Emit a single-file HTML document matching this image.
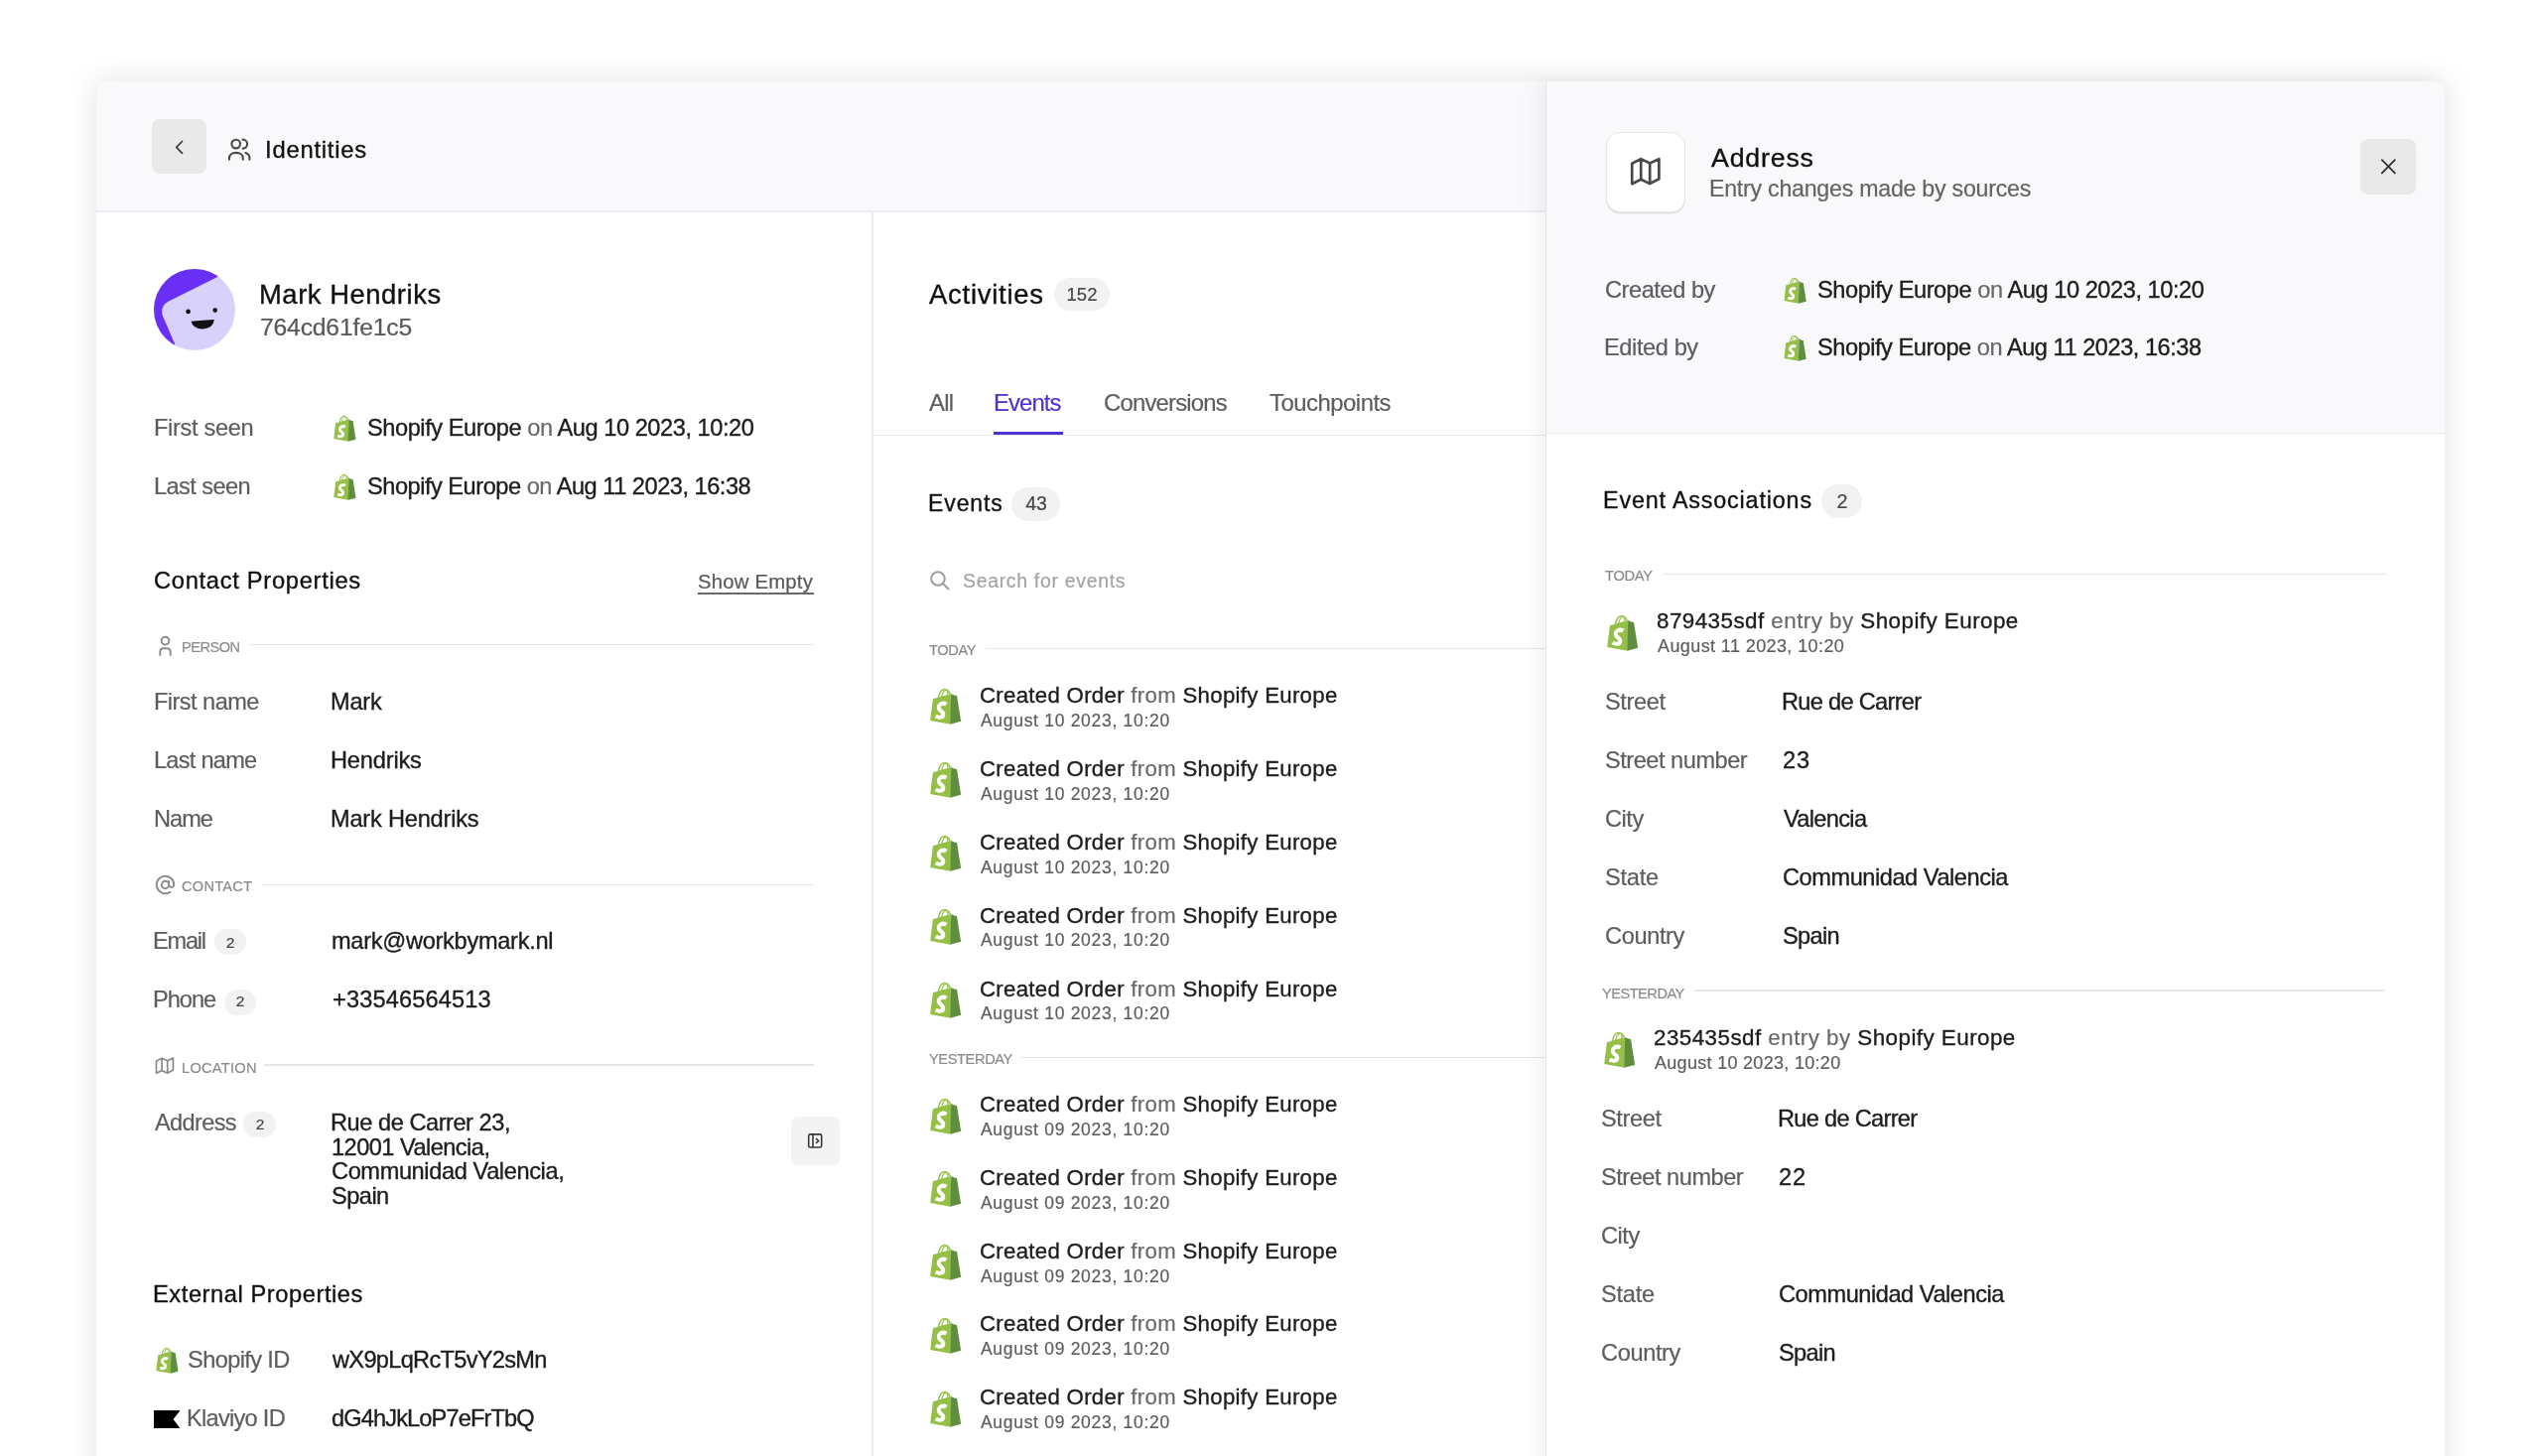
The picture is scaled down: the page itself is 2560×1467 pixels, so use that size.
<!DOCTYPE html><html><head><meta charset="utf-8"><style>
*{margin:0;padding:0;box-sizing:content-box}
html,body{width:2560px;height:1467px;overflow:hidden;background:#fff}
body{position:relative;font-family:"Liberation Sans",sans-serif}
.r{position:absolute}
.t{position:absolute;white-space:pre;line-height:1}
.t{will-change:transform;-webkit-text-stroke:0.2px currentColor}
.m{-webkit-text-stroke:0.35px currentColor}
</style></head><body><svg width="0" height="0" style="position:absolute"><defs>
<symbol id="shop" viewBox="0 0 32 37">
<path d="M2.8 10.4 L8.2 8.8 L14 7.2 L21.8 5.1 L20.8 36.4 L0 32.5 Z" fill="#95bf47"/>
<path d="M21.5 5.1 L24.6 6.6 L27.4 7.1 L31.6 33.5 L20.5 36.4 Z" fill="#5e8e3e"/>
<path d="M8.4 9.2 C9.6 3.6 11.8 0.6 14.6 0.6 C17.6 0.6 19.4 2.8 20.6 5.4" fill="none" stroke="#95bf47" stroke-width="1.5"/>
<path d="M11.6 8.4 C12.6 4.2 14.2 1.8 16.2 1.4" fill="none" stroke="#95bf47" stroke-width="1.3"/>
<path d="M17.2 2.0 C17.9 2.9 18.2 4.6 18.2 6" fill="none" stroke="#95bf47" stroke-width="1.3"/>
<path d="M16.6 15.9 C14.9 14.8 12.4 14.6 10.5 15.9 C8.2 17.5 8.3 20.3 10.1 21.9 C11.6 23.2 13.6 23.9 13.4 26.5 C13.2 29.4 9.4 30.3 5.6 28.1" fill="none" stroke="#fff" stroke-width="4.1" stroke-linecap="butt"/>
</symbol></defs></svg>
<div class="r" style="left:97.00px;top:82.00px;width:2365.50px;height:1425.00px;background:#ffffff;border-radius:10px;box-shadow:0 0 30px 3px rgba(0,0,0,0.095);overflow:hidden;"></div>
<div class="r" style="left:97.00px;top:82.00px;width:1461.00px;height:130.00px;background:#f9f9fb;border-radius:0px;border-top-left-radius:10px;"></div>
<div class="r" style="left:97.00px;top:212.00px;width:1461.00px;height:1.50px;background:#ededf3;border-radius:0px;"></div>
<div class="r" style="left:878.00px;top:213.00px;width:1.50px;height:1300.00px;background:#ececee;border-radius:0px;"></div>
<div class="r" style="left:153.00px;top:120.00px;width:55.00px;height:55.00px;background:#e9e9ea;border-radius:8px;"></div>
<svg class="r" style="left:170px;top:137px" width="22" height="22" viewBox="0 0 22 22"><path d="M13.5 5.5 L7.7 11.4 L13.5 17.3" fill="none" stroke="#3c3c3f" stroke-width="1.7" stroke-linecap="round" stroke-linejoin="round"/></svg>
<svg class="r" style="left:229px;top:139px" width="24" height="24" viewBox="0 0 24 24"><g fill="none" stroke="#4a4a4a" stroke-width="2.1" stroke-linecap="round"><circle cx="8.7" cy="6.1" r="4.3"/><path d="M2 21.8 V20.2 C2 16.9 4.9 14.9 8.9 14.9 C12.9 14.9 15.8 16.9 15.8 20.2 V21.8"/><path d="M15.6 1.6 A4.5 4.5 0 0 1 15.6 10.6"/><path d="M18.4 15 C20.9 15.8 22.4 17.6 22.4 20.2 V21.8"/></g></svg>
<div id="t0" class="t m" style="left:266.90px;top:139px;font-size:23.80px;color:#111113;letter-spacing:0.776px;">Identities</div>
<svg class="r" style="left:155px;top:271px" width="82" height="82" viewBox="0 0 82 82"><defs><clipPath id="avc"><circle cx="41" cy="41" r="41"/></clipPath></defs><g clip-path="url(#avc)"><rect width="82" height="82" fill="#d8d1fb"/><path d="M-2 -2 H66 L64.2 7.9 L14.5 32.8 Q6.5 37.5 8.6 46.5 L21.5 76.5 L-2 90 Z" fill="#6a2ff4"/></g><circle cx="34.6" cy="42.9" r="2.3" fill="#111"/><circle cx="61.7" cy="41.6" r="2.3" fill="#111"/><path d="M37.5 52.8 Q49 51.6 60.8 51 Q60 59.6 49.5 60.4 Q39.5 60.6 37.5 52.8 Z" fill="#111"/></svg>
<div id="t1" class="t m" style="left:261.30px;top:283px;font-size:27.40px;color:#111113;letter-spacing:0.543px;">Mark Hendriks</div>
<div id="t2" class="t" style="left:261.50px;top:318px;font-size:24.70px;color:#58585b;letter-spacing:-0.182px;">764cd61fe1c5</div>
<div id="t3" class="t" style="left:154.70px;top:420px;font-size:23.60px;color:#5d5d60;letter-spacing:-0.333px;">First seen</div>
<svg class="r" style="left:335.80px;top:418.80px" width="23.00" height="26.20" viewBox="0 0 32 37"><use href="#shop"/></svg>
<div id="t4" class="t" style="left:369.70px;top:420px;font-size:23.60px;color:#1d1d1f;letter-spacing:-0.443px;"><span class="m">Shopify Europe</span> <span style="color:#68686b">on</span> <span class="m">Aug 10 2023, 10:20</span></div>
<div id="t5" class="t" style="left:154.70px;top:479px;font-size:23.60px;color:#5d5d60;letter-spacing:-0.588px;">Last seen</div>
<svg class="r" style="left:335.80px;top:477.60px" width="23.00" height="26.20" viewBox="0 0 32 37"><use href="#shop"/></svg>
<div id="t6" class="t" style="left:369.70px;top:479px;font-size:23.60px;color:#1d1d1f;letter-spacing:-0.485px;"><span class="m">Shopify Europe</span> <span style="color:#68686b">on</span> <span class="m">Aug 11 2023, 16:38</span></div>
<div id="t7" class="t m" style="left:154.90px;top:574px;font-size:23.70px;color:#111113;letter-spacing:0.705px;">Contact Properties</div>
<div id="t8" class="t" style="left:703.40px;top:576px;font-size:20.30px;color:#58585b;letter-spacing:0.222px;">Show Empty</div>
<div class="r" style="left:703.30px;top:597.00px;width:116.40px;height:1.60px;background:#6a6a6a;border-radius:0px;"></div>
<div id="t9" class="t" style="left:182.90px;top:645px;font-size:14.60px;color:#8b8b8e;letter-spacing:-0.500px;">PERSON</div>
<svg class="r" style="left:157px;top:640px" width="20" height="21" viewBox="0 0 20 21"><g fill="none" stroke="#8b8b8b" stroke-width="1.9" stroke-linecap="round"><circle cx="9.5" cy="5.6" r="3.9"/><path d="M4.3 20 V16.8 Q4.3 13.2 7.9 13.2 H11.1 Q14.7 13.2 14.7 16.8 V20"/></g></svg>
<div class="r" style="left:251.00px;top:648.90px;width:569.00px;height:1.20px;background:#e6e6e6;border-radius:0px;"></div>
<div id="t10" class="t" style="left:154.70px;top:696px;font-size:23.60px;color:#5d5d60;letter-spacing:-0.557px;">First name</div>
<div id="t11" class="t m" style="left:333.20px;top:696px;font-size:23.60px;color:#1d1d1f;letter-spacing:-0.201px;">Mark</div>
<div id="t12" class="t" style="left:154.70px;top:755px;font-size:23.60px;color:#5d5d60;letter-spacing:-0.750px;">Last name</div>
<div id="t13" class="t m" style="left:333.20px;top:755px;font-size:23.60px;color:#1d1d1f;letter-spacing:-0.171px;">Hendriks</div>
<div id="t14" class="t" style="left:154.70px;top:814px;font-size:23.60px;color:#5d5d60;letter-spacing:-1.000px;">Name</div>
<div id="t15" class="t m" style="left:333.20px;top:814px;font-size:23.60px;color:#1d1d1f;letter-spacing:-0.208px;">Mark Hendriks</div>
<div id="t16" class="t" style="left:182.90px;top:886px;font-size:14.60px;color:#8b8b8e;letter-spacing:0.251px;">CONTACT</div>
<svg class="r" style="left:156px;top:881px" width="21" height="21" viewBox="0 0 24 24"><g fill="none" stroke="#8b8b8b" stroke-width="2.2" stroke-linecap="round"><circle cx="12" cy="12" r="4.2"/><path d="M16.2 8v4.6a3 3 0 0 0 5.8 0v-0.6a10 10 0 1 0-4.6 8.4"/></g></svg>
<div class="r" style="left:264.00px;top:890.50px;width:556.00px;height:1.20px;background:#e6e6e6;border-radius:0px;"></div>
<div id="t17" class="t" style="left:154.30px;top:937px;font-size:23.60px;color:#5d5d60;letter-spacing:-1.250px;">Email</div>
<div class="r" style="left:216.00px;top:936.00px;width:32.30px;height:26.00px;background:#f2f2f3;border-radius:13.0px;"></div>
<div id="t18" class="t" style="left:232.15px;top:942px;font-size:15.50px;color:#46464a;transform:translateX(-50%);">2</div>
<div id="t19" class="t m" style="left:333.60px;top:937px;font-size:23.60px;color:#1d1d1f;letter-spacing:-0.294px;">mark@workbymark.nl</div>
<div id="t20" class="t" style="left:154.30px;top:996px;font-size:23.60px;color:#5d5d60;letter-spacing:-1.000px;">Phone</div>
<div class="r" style="left:226.00px;top:997.00px;width:32.00px;height:25.60px;background:#f2f2f3;border-radius:12.800000000000011px;"></div>
<div id="t21" class="t" style="left:242.00px;top:1001px;font-size:15.50px;color:#46464a;transform:translateX(-50%);">2</div>
<div id="t22" class="t m" style="left:334.50px;top:996px;font-size:23.60px;color:#1d1d1f;letter-spacing:0.136px;">+33546564513</div>
<div id="t23" class="t" style="left:182.90px;top:1069px;font-size:14.60px;color:#8b8b8e;letter-spacing:0.287px;">LOCATION</div>
<svg class="r" style="left:155px;top:1063px" width="23" height="22" viewBox="0 0 24 23"><path d="M2.6 6.26 L8.45 3.3 L14.3 6.07 L20.3 3.3 V16 L14.3 19.05 L8.45 16.34 L2.6 19.1 Z M8.45 3.3 V16.34 M14.3 6.07 V19.05" fill="none" stroke="#8b8b8b" stroke-width="1.8" stroke-linejoin="round"/></svg>
<div class="r" style="left:266.40px;top:1072.40px;width:553.60px;height:1.20px;background:#e6e6e6;border-radius:0px;"></div>
<div id="t24" class="t" style="left:156.00px;top:1120px;font-size:23.60px;color:#5d5d60;letter-spacing:-0.666px;">Address</div>
<div class="r" style="left:245.40px;top:1120.20px;width:32.60px;height:25.40px;background:#f2f2f3;border-radius:12.699999999999932px;"></div>
<div id="t25" class="t" style="left:261.70px;top:1125px;font-size:15.50px;color:#46464a;transform:translateX(-50%);">2</div>
<div id="t26" class="t m" style="left:332.60px;top:1120px;font-size:23.60px;color:#1d1d1f;letter-spacing:-0.461px;">Rue de Carrer 23,</div>
<div id="t27" class="t m" style="left:333.60px;top:1145px;font-size:23.60px;color:#1d1d1f;letter-spacing:-0.536px;">12001 Valencia,</div>
<div id="t28" class="t m" style="left:333.60px;top:1169px;font-size:23.60px;color:#1d1d1f;letter-spacing:-0.394px;">Communidad Valencia,</div>
<div id="t29" class="t m" style="left:333.60px;top:1194px;font-size:23.60px;color:#1d1d1f;letter-spacing:-0.525px;">Spain</div>
<div class="r" style="left:797.00px;top:1125.30px;width:49.00px;height:49.00px;background:#f3f3f3;border-radius:7px;"></div>
<svg class="r" style="left:812px;top:1141px" width="18" height="18" viewBox="0 0 18 18"><g fill="none" stroke="#3a3a3a" stroke-width="1.6" stroke-linejoin="round" stroke-linecap="round"><rect x="2.7" y="1.9" width="13" height="13.1" rx="1.6"/><path d="M7 1.9 V15"/><path d="M10.5 6.6 L12.8 8.5 L10.5 10.4"/></g></svg>
<div id="t30" class="t m" style="left:153.90px;top:1293px;font-size:23.70px;color:#111113;letter-spacing:0.555px;">External Properties</div>
<svg class="r" style="left:156.70px;top:1358.20px" width="23.10" height="26.20" viewBox="0 0 32 37"><use href="#shop"/></svg>
<div id="t31" class="t" style="left:189.30px;top:1359px;font-size:23.60px;color:#5d5d60;letter-spacing:-0.611px;">Shopify ID</div>
<div id="t32" class="t m" style="left:335.10px;top:1359px;font-size:23.60px;color:#1d1d1f;letter-spacing:-0.700px;">wX9pLqRcT5vY2sMn</div>
<svg class="r" style="left:154.8px;top:1421.2px" width="26.5" height="18.1" viewBox="0 0 26.5 18.1"><path d="M0 0 H26.5 L19.6 9.05 L26.5 18.1 H0 Z" fill="#000"/></svg>
<div id="t33" class="t" style="left:188.30px;top:1418px;font-size:23.60px;color:#5d5d60;letter-spacing:-0.723px;">Klaviyo ID</div>
<div id="t34" class="t m" style="left:334.10px;top:1418px;font-size:23.60px;color:#1d1d1f;letter-spacing:-0.868px;">dG4hJkLoP7eFrTbQ</div>
<div id="t35" class="t m" style="left:936.00px;top:283px;font-size:27.50px;color:#111113;letter-spacing:0.722px;">Activities</div>
<div class="r" style="left:1061.60px;top:279.70px;width:56.70px;height:33.10px;background:#f2f2f3;border-radius:16.55000000000001px;"></div>
<div id="t36" class="t" style="left:1089.95px;top:288px;font-size:18.50px;color:#46464a;transform:translateX(-50%);">152</div>
<div id="t37" class="t" style="left:935.70px;top:394px;font-size:23.90px;color:#5d5d60;letter-spacing:-0.750px;">All</div>
<div id="t38" class="t" style="left:1000.80px;top:394px;font-size:23.90px;color:#5031d2;letter-spacing:-0.900px;">Events</div>
<div id="t39" class="t" style="left:1111.80px;top:394px;font-size:23.90px;color:#5d5d60;letter-spacing:-0.800px;">Conversions</div>
<div id="t40" class="t" style="left:1279.10px;top:394px;font-size:23.90px;color:#5d5d60;letter-spacing:-0.500px;">Touchpoints</div>
<div class="r" style="left:879.00px;top:437.90px;width:680.00px;height:1.40px;background:#e8e8e8;border-radius:0px;"></div>
<div class="r" style="left:1001.00px;top:435.00px;width:70.00px;height:3.20px;background:#5031d2;border-radius:0px;"></div>
<div id="t41" class="t m" style="left:934.70px;top:496px;font-size:23.00px;color:#111113;letter-spacing:0.900px;">Events</div>
<div class="r" style="left:1018.70px;top:490.90px;width:49.60px;height:34.00px;background:#f2f2f3;border-radius:17.0px;"></div>
<div id="t42" class="t" style="left:1043.50px;top:498px;font-size:19.50px;color:#46464a;transform:translateX(-50%);">43</div>
<svg class="r" style="left:935px;top:573px" width="24" height="24" viewBox="0 0 24 24"><g fill="none" stroke="#9d9d9d" stroke-width="2" stroke-linecap="round"><circle cx="10" cy="10" r="6.8"/><path d="M15 15 L20.5 20.5"/></g></svg>
<div id="t43" class="t" style="left:969.80px;top:576px;font-size:19.40px;color:#a3a3a6;letter-spacing:0.719px;">Search for events</div>
<div id="t44" class="t" style="left:935.90px;top:648px;font-size:14.60px;color:#8b8b8e;letter-spacing:-0.375px;">TODAY</div>
<div class="r" style="left:992.70px;top:652.70px;width:565.30px;height:1.20px;background:#e6e6e6;border-radius:0px;"></div>
<svg class="r" style="left:937.30px;top:694.40px" width="31.70" height="36.30" viewBox="0 0 32 37"><use href="#shop"/></svg>
<div id="t45" class="t" style="left:987.40px;top:690px;font-size:22.20px;color:#1d1d1f;letter-spacing:0.312px;"><span class="m">Created Order</span> <span style="color:#68686b">from</span> <span class="m">Shopify Europe</span></div>
<div id="t46" class="t" style="left:988.40px;top:718px;font-size:17.50px;color:#5d5d5d;letter-spacing:0.700px;">August 10 2023, 10:20</div>
<svg class="r" style="left:937.30px;top:768.30px" width="31.70" height="36.30" viewBox="0 0 32 37"><use href="#shop"/></svg>
<div id="t47" class="t" style="left:987.40px;top:764px;font-size:22.20px;color:#1d1d1f;letter-spacing:0.312px;"><span class="m">Created Order</span> <span style="color:#68686b">from</span> <span class="m">Shopify Europe</span></div>
<div id="t48" class="t" style="left:988.40px;top:792px;font-size:17.50px;color:#5d5d5d;letter-spacing:0.700px;">August 10 2023, 10:20</div>
<svg class="r" style="left:937.30px;top:842.20px" width="31.70" height="36.30" viewBox="0 0 32 37"><use href="#shop"/></svg>
<div id="t49" class="t" style="left:987.40px;top:838px;font-size:22.20px;color:#1d1d1f;letter-spacing:0.312px;"><span class="m">Created Order</span> <span style="color:#68686b">from</span> <span class="m">Shopify Europe</span></div>
<div id="t50" class="t" style="left:988.40px;top:866px;font-size:17.50px;color:#5d5d5d;letter-spacing:0.700px;">August 10 2023, 10:20</div>
<svg class="r" style="left:937.30px;top:916.10px" width="31.70" height="36.30" viewBox="0 0 32 37"><use href="#shop"/></svg>
<div id="t51" class="t" style="left:987.40px;top:912px;font-size:22.20px;color:#1d1d1f;letter-spacing:0.312px;"><span class="m">Created Order</span> <span style="color:#68686b">from</span> <span class="m">Shopify Europe</span></div>
<div id="t52" class="t" style="left:988.40px;top:939px;font-size:17.50px;color:#5d5d5d;letter-spacing:0.700px;">August 10 2023, 10:20</div>
<svg class="r" style="left:937.30px;top:990.00px" width="31.70" height="36.30" viewBox="0 0 32 37"><use href="#shop"/></svg>
<div id="t53" class="t" style="left:987.40px;top:986px;font-size:22.20px;color:#1d1d1f;letter-spacing:0.312px;"><span class="m">Created Order</span> <span style="color:#68686b">from</span> <span class="m">Shopify Europe</span></div>
<div id="t54" class="t" style="left:988.40px;top:1013px;font-size:17.50px;color:#5d5d5d;letter-spacing:0.700px;">August 10 2023, 10:20</div>
<div id="t55" class="t" style="left:935.70px;top:1060px;font-size:14.60px;color:#8b8b8e;letter-spacing:-0.375px;">YESTERDAY</div>
<div class="r" style="left:1028.00px;top:1064.70px;width:530.00px;height:1.20px;background:#e6e6e6;border-radius:0px;"></div>
<svg class="r" style="left:937.30px;top:1106.70px" width="31.70" height="36.30" viewBox="0 0 32 37"><use href="#shop"/></svg>
<div id="t56" class="t" style="left:987.40px;top:1102px;font-size:22.20px;color:#1d1d1f;letter-spacing:0.312px;"><span class="m">Created Order</span> <span style="color:#68686b">from</span> <span class="m">Shopify Europe</span></div>
<div id="t57" class="t" style="left:988.40px;top:1130px;font-size:17.50px;color:#5d5d5d;letter-spacing:0.700px;">August 09 2023, 10:20</div>
<svg class="r" style="left:937.30px;top:1180.45px" width="31.70" height="36.30" viewBox="0 0 32 37"><use href="#shop"/></svg>
<div id="t58" class="t" style="left:987.40px;top:1176px;font-size:22.20px;color:#1d1d1f;letter-spacing:0.312px;"><span class="m">Created Order</span> <span style="color:#68686b">from</span> <span class="m">Shopify Europe</span></div>
<div id="t59" class="t" style="left:988.40px;top:1204px;font-size:17.50px;color:#5d5d5d;letter-spacing:0.700px;">August 09 2023, 10:20</div>
<svg class="r" style="left:937.30px;top:1254.20px" width="31.70" height="36.30" viewBox="0 0 32 37"><use href="#shop"/></svg>
<div id="t60" class="t" style="left:987.40px;top:1250px;font-size:22.20px;color:#1d1d1f;letter-spacing:0.312px;"><span class="m">Created Order</span> <span style="color:#68686b">from</span> <span class="m">Shopify Europe</span></div>
<div id="t61" class="t" style="left:988.40px;top:1278px;font-size:17.50px;color:#5d5d5d;letter-spacing:0.700px;">August 09 2023, 10:20</div>
<svg class="r" style="left:937.30px;top:1327.95px" width="31.70" height="36.30" viewBox="0 0 32 37"><use href="#shop"/></svg>
<div id="t62" class="t" style="left:987.40px;top:1323px;font-size:22.20px;color:#1d1d1f;letter-spacing:0.312px;"><span class="m">Created Order</span> <span style="color:#68686b">from</span> <span class="m">Shopify Europe</span></div>
<div id="t63" class="t" style="left:988.40px;top:1351px;font-size:17.50px;color:#5d5d5d;letter-spacing:0.700px;">August 09 2023, 10:20</div>
<svg class="r" style="left:937.30px;top:1401.70px" width="31.70" height="36.30" viewBox="0 0 32 37"><use href="#shop"/></svg>
<div id="t64" class="t" style="left:987.40px;top:1397px;font-size:22.20px;color:#1d1d1f;letter-spacing:0.312px;"><span class="m">Created Order</span> <span style="color:#68686b">from</span> <span class="m">Shopify Europe</span></div>
<div id="t65" class="t" style="left:988.40px;top:1425px;font-size:17.50px;color:#5d5d5d;letter-spacing:0.700px;">August 09 2023, 10:20</div>
<div class="r" style="left:1557px;top:82px;width:904.5px;height:1500px;background:#fff;border-left:1px solid #e4e4e4;box-shadow:-8px 0 20px rgba(0,0,0,0.05);border-top-right-radius:10px;overflow:hidden"></div>
<div class="r" style="left:1558.00px;top:82.00px;width:904.50px;height:354.30px;background:#f9f9fb;border-radius:0px;border-top-right-radius:10px;"></div>
<div class="r" style="left:1558.00px;top:435.60px;width:904.50px;height:1.40px;background:#e9e9e9;border-radius:0px;"></div>
<div class="r" style="left:1618px;top:133px;width:78px;height:79px;background:#fff;border:1px solid #e6e6e6;border-radius:14px;box-shadow:0 1.5px 0 #e2e2e2"></div>
<svg class="r" style="left:1640px;top:157px" width="35" height="31" viewBox="0 0 35 31"><path d="M4.2 7.8 L13.2 3.1 L22.2 7.5 L31.4 3.1 V23.3 L22.2 28.1 L13.2 23.8 L4.2 28.2 Z M13.2 3.1 V23.8 M22.2 7.5 V28.1" fill="none" stroke="#494949" stroke-width="2.7" stroke-linejoin="round"/></svg>
<div id="t66" class="t m" style="left:1724.30px;top:146px;font-size:26.70px;color:#111113;letter-spacing:0.833px;">Address</div>
<div id="t67" class="t" style="left:1722.30px;top:179px;font-size:23.20px;color:#646464;letter-spacing:-0.250px;">Entry changes made by sources</div>
<div class="r" style="left:2378.20px;top:140.00px;width:55.60px;height:56.00px;background:#e9e9ea;border-radius:8px;"></div>
<svg class="r" style="left:2396px;top:158px" width="20" height="20" viewBox="0 0 20 20"><path d="M3.8 3.2 L16.8 16.4 M16.8 3.2 L3.8 16.4" fill="none" stroke="#333" stroke-width="1.9" stroke-linecap="round"/></svg>
<div id="t68" class="t" style="left:1616.60px;top:281px;font-size:23.60px;color:#5d5d60;letter-spacing:-0.444px;">Created by</div>
<svg class="r" style="left:1797.00px;top:279.60px" width="23.40" height="26.20" viewBox="0 0 32 37"><use href="#shop"/></svg>
<div id="t69" class="t" style="left:1831.20px;top:281px;font-size:23.60px;color:#1d1d1f;letter-spacing:-0.443px;"><span class="m">Shopify Europe</span> <span style="color:#68686b">on</span> <span class="m">Aug 10 2023, 10:20</span></div>
<div id="t70" class="t" style="left:1615.60px;top:339px;font-size:23.60px;color:#5d5d60;letter-spacing:-0.401px;">Edited by</div>
<svg class="r" style="left:1797.00px;top:338.20px" width="23.40" height="26.20" viewBox="0 0 32 37"><use href="#shop"/></svg>
<div id="t71" class="t" style="left:1831.20px;top:339px;font-size:23.60px;color:#1d1d1f;letter-spacing:-0.472px;"><span class="m">Shopify Europe</span> <span style="color:#68686b">on</span> <span class="m">Aug 11 2023, 16:38</span></div>
<div id="t72" class="t m" style="left:1615.20px;top:493px;font-size:23.30px;color:#111113;letter-spacing:0.853px;">Event Associations</div>
<div class="r" style="left:1835.00px;top:488.10px;width:41.00px;height:34.00px;background:#f2f2f3;border-radius:17.0px;"></div>
<div id="t73" class="t" style="left:1855.50px;top:496px;font-size:19.80px;color:#46464a;transform:translateX(-50%);">2</div>
<div id="t74" class="t" style="left:1617.20px;top:573px;font-size:14.60px;color:#8b8b8e;letter-spacing:-0.250px;">TODAY</div>
<div class="r" style="left:1675.10px;top:577.50px;width:729.50px;height:1.20px;background:#e6e6e6;border-radius:0px;"></div>
<svg class="r" style="left:1619.00px;top:619.50px" width="31.70" height="36.30" viewBox="0 0 32 37"><use href="#shop"/></svg>
<div id="t75" class="t" style="left:1669.20px;top:615px;font-size:22.40px;color:#1d1d1f;letter-spacing:0.453px;"><span class="m">879435sdf</span> <span style="color:#68686b">entry by</span> <span class="m">Shopify Europe</span></div>
<div id="t76" class="t" style="left:1670.20px;top:642px;font-size:18.00px;color:#5d5d5d;letter-spacing:0.400px;">August 11 2023, 10:20</div>
<div id="t77" class="t" style="left:1616.60px;top:696px;font-size:23.60px;color:#5d5d60;letter-spacing:-0.380px;">Street</div>
<div id="t78" class="t m" style="left:1794.60px;top:696px;font-size:23.60px;color:#1d1d1f;letter-spacing:-0.700px;">Rue de Carrer</div>
<div id="t79" class="t" style="left:1616.60px;top:755px;font-size:23.60px;color:#5d5d60;letter-spacing:-0.484px;">Street number</div>
<div id="t80" class="t m" style="left:1795.60px;top:755px;font-size:23.60px;color:#1d1d1f;letter-spacing:1.000px;">23</div>
<div id="t81" class="t" style="left:1616.60px;top:814px;font-size:23.60px;color:#5d5d60;letter-spacing:-0.467px;">City</div>
<div id="t82" class="t m" style="left:1796.60px;top:814px;font-size:23.60px;color:#1d1d1f;letter-spacing:-0.672px;">Valencia</div>
<div id="t83" class="t" style="left:1616.60px;top:873px;font-size:23.60px;color:#5d5d60;letter-spacing:-0.225px;">State</div>
<div id="t84" class="t m" style="left:1795.60px;top:873px;font-size:23.60px;color:#1d1d1f;letter-spacing:-0.456px;">Communidad Valencia</div>
<div id="t85" class="t" style="left:1616.60px;top:932px;font-size:23.60px;color:#5d5d60;letter-spacing:-0.367px;">Country</div>
<div id="t86" class="t m" style="left:1795.60px;top:932px;font-size:23.60px;color:#1d1d1f;letter-spacing:-0.650px;">Spain</div>
<div id="t87" class="t" style="left:1613.90px;top:994px;font-size:14.60px;color:#8b8b8e;letter-spacing:-0.500px;">YESTERDAY</div>
<div class="r" style="left:1707.10px;top:997.40px;width:694.50px;height:1.20px;background:#e6e6e6;border-radius:0px;"></div>
<svg class="r" style="left:1615.70px;top:1040.00px" width="31.70" height="36.30" viewBox="0 0 32 37"><use href="#shop"/></svg>
<div id="t88" class="t" style="left:1665.90px;top:1035px;font-size:22.40px;color:#1d1d1f;letter-spacing:0.453px;"><span class="m">235435sdf</span> <span style="color:#68686b">entry by</span> <span class="m">Shopify Europe</span></div>
<div id="t89" class="t" style="left:1666.90px;top:1062px;font-size:18.00px;color:#5d5d5d;letter-spacing:0.300px;">August 10 2023, 10:20</div>
<div id="t90" class="t" style="left:1613.30px;top:1116px;font-size:23.60px;color:#5d5d60;letter-spacing:-0.380px;">Street</div>
<div id="t91" class="t m" style="left:1791.30px;top:1116px;font-size:23.60px;color:#1d1d1f;letter-spacing:-0.700px;">Rue de Carrer</div>
<div id="t92" class="t" style="left:1613.30px;top:1175px;font-size:23.60px;color:#5d5d60;letter-spacing:-0.484px;">Street number</div>
<div id="t93" class="t m" style="left:1792.30px;top:1175px;font-size:23.60px;color:#1d1d1f;letter-spacing:1.000px;">22</div>
<div id="t94" class="t" style="left:1613.30px;top:1234px;font-size:23.60px;color:#5d5d60;letter-spacing:-0.467px;">City</div>
<div id="t95" class="t" style="left:1613.30px;top:1293px;font-size:23.60px;color:#5d5d60;letter-spacing:-0.225px;">State</div>
<div id="t96" class="t m" style="left:1792.30px;top:1293px;font-size:23.60px;color:#1d1d1f;letter-spacing:-0.456px;">Communidad Valencia</div>
<div id="t97" class="t" style="left:1613.30px;top:1352px;font-size:23.60px;color:#5d5d60;letter-spacing:-0.367px;">Country</div>
<div id="t98" class="t m" style="left:1792.30px;top:1352px;font-size:23.60px;color:#1d1d1f;letter-spacing:-0.650px;">Spain</div>
</body></html>
